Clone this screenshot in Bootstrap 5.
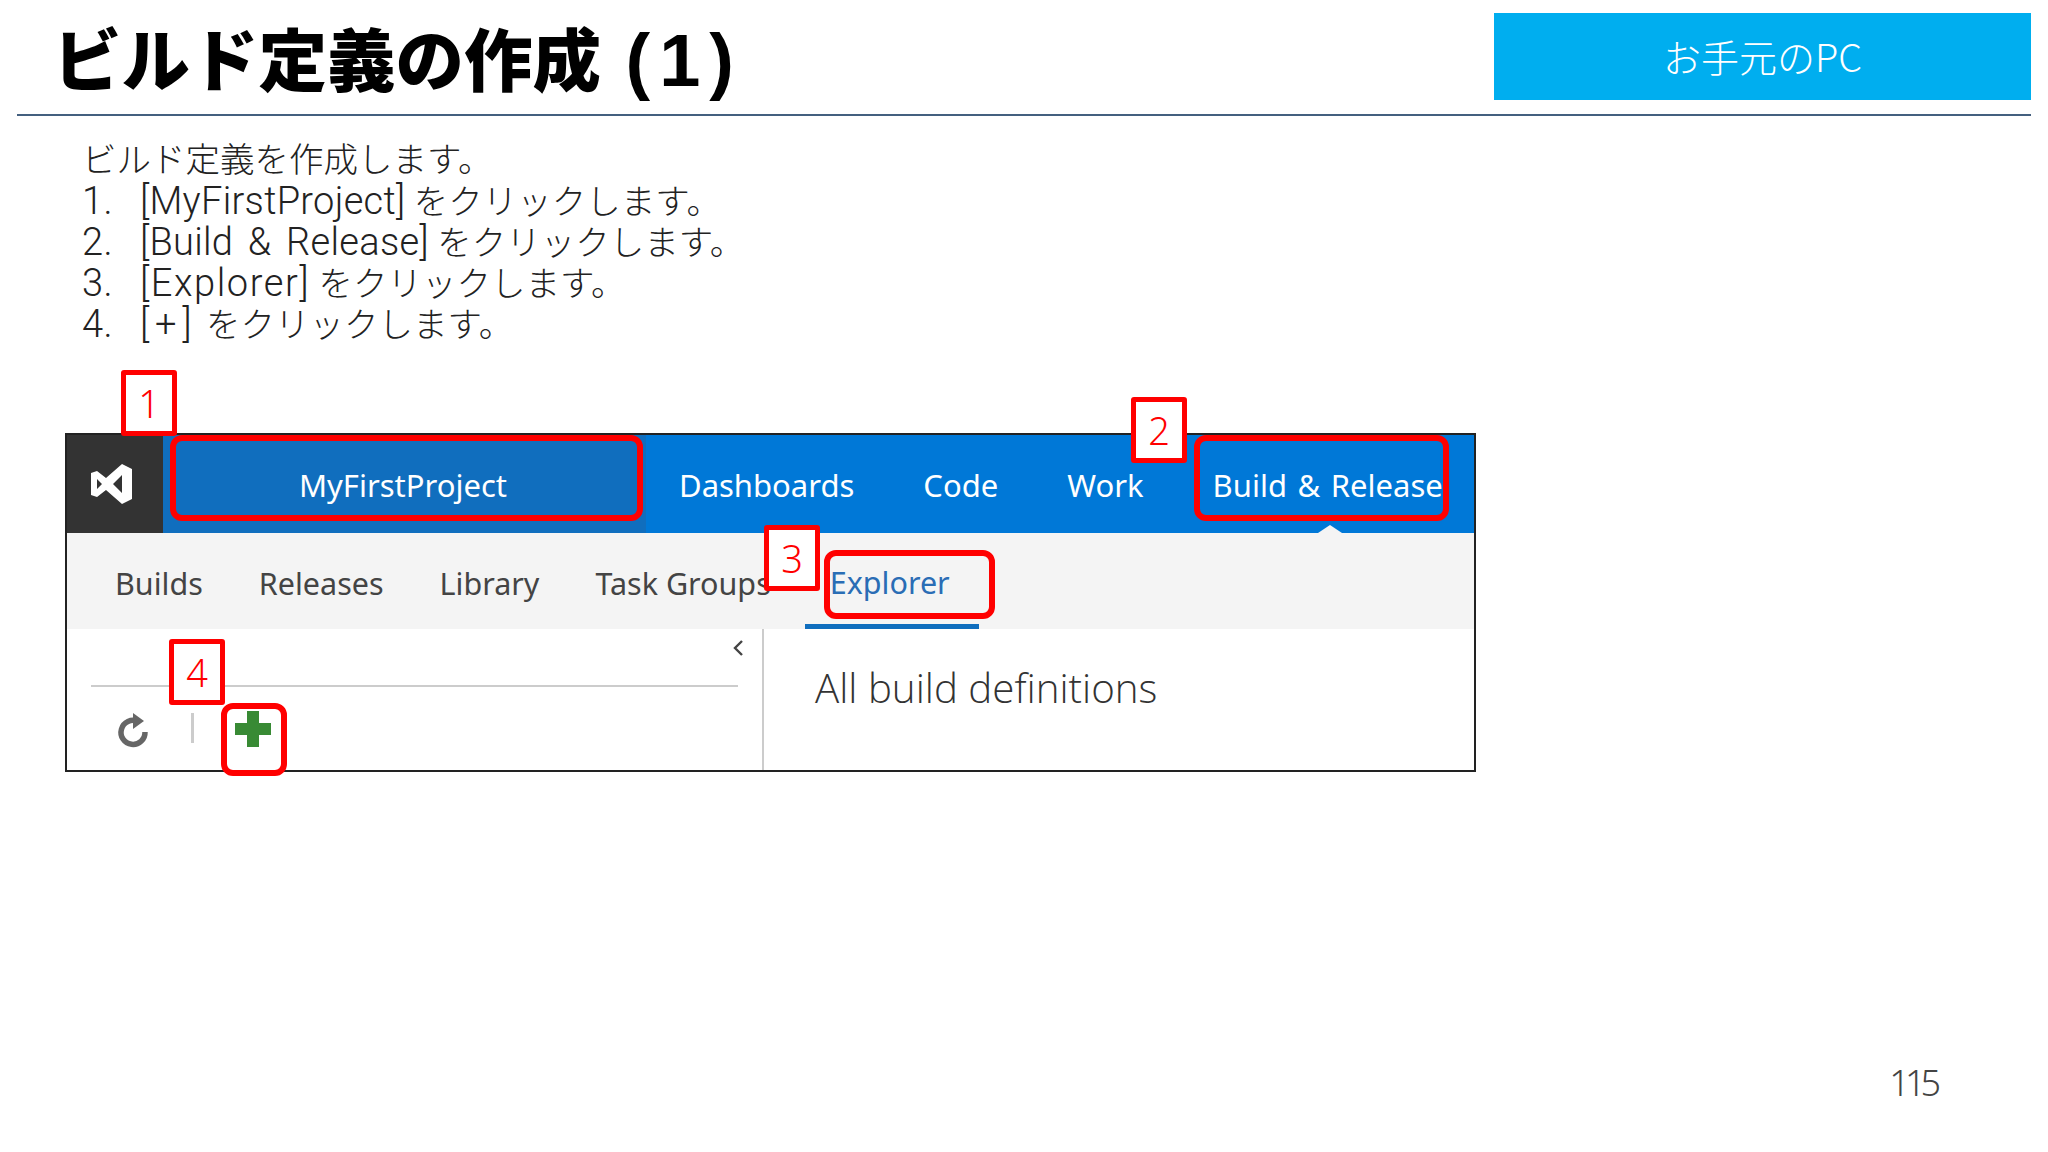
<!DOCTYPE html>
<html lang="ja">
<head>
<meta charset="utf-8">
<title>ビルド定義の作成 (1)</title>
<link href="https://cdn.jsdelivr.net/npm/bootstrap@5.3.0/dist/css/bootstrap.min.css" rel="stylesheet">
<style>
:root{--ui:"Open Sans","Noto Sans CJK JP",sans-serif;}
html,body{height:100%;}
body{background:#fff;font-family:var(--ui);color:#222;overflow:hidden;}
.slide-page{width:2048px;height:1152px;padding:13px 17px 0;}
.slide-head{height:103px;border-bottom:2px solid #44607f;}
.slide-title{font-family:"Noto Sans CJK JP",sans-serif;font-weight:900;font-size:68.5px;line-height:1;color:#000;margin:0 0 0 36px;padding-bottom:16px;}
.title-no{font-family:"Liberation Sans",sans-serif;font-weight:700;font-size:74px;letter-spacing:9px;margin-left:-5px;}
.env-tag{width:537px;height:87px;background:#00aeef;color:#fff;font-size:38px;font-weight:300;font-family:"Noto Sans CJK JP",sans-serif;padding-bottom:2px;}
.steps{margin:24px 0 0 65px;font-size:34.5px;line-height:41px;font-weight:300;font-family:Roboto,"Noto Sans CJK JP",sans-serif;color:#222;}
.step-row{height:41px;}
.steps-num{width:58px;}
.lat{font-family:Roboto,sans-serif;font-size:38px;line-height:41px;font-weight:300;letter-spacing:.3px;word-spacing:5px;}
.wide-gap{letter-spacing:1.6px;}
.plus-gap{letter-spacing:6px;}
.shot-wrap{margin:88px 0 0 48px;width:1411px;height:339px;}
.shot{width:1411px;height:339px;border:2px solid #222;background:#fff;font-family:"Noto Sans",sans-serif;overflow:hidden;}
.top-bar{height:98px;background:#0078d7;color:#fff;font-size:31px;}
.vs-cell{width:96px;background:#333;padding-right:8px;}
.vs-mark{width:41px;height:40px;}
.project-cell{width:483px;background:#106ebe;margin-right:33px;padding:3px 3px 0 0;}
.top-links{column-gap:69px;padding-top:3px;}
.build-link{word-spacing:2.5px;}
.sub-bar{height:96px;background:#f4f4f4;color:#444;font-size:30.5px;padding-left:48px;column-gap:56px;padding-top:5px;}
.sub-active{color:#2a6db5;border-bottom:5px solid #106ebe;padding:8px 29px 0 25px;margin:-5px 0 0 -22px;align-self:stretch;display:flex;align-items:center;}
.pane-left{width:697px;border-right:2px solid #ccc;}
.pane-rule{height:2px;background:#ccc;margin:0 24px 0 24px;}
.pane-top{height:56px;padding:10px 18px 0 0;}
.pane-tools{height:82px;padding-left:49px;}
.tool-icon{margin-top:3px;}
.tool-plus{margin-top:1px;}
.tool-gap{width:3px;height:30px;background:#ccc;margin:0 41px 0 41px;}
.pane-title{font-family:"Open Sans",sans-serif;font-size:40.3px;font-weight:300;color:#333;padding:29px 0 0 51px;}
.mark-num,.mark-box{position:absolute;border:5px solid #f00;border-radius:3px;}
.mark-num{width:56px;height:66px;background:#fff;color:#f00;font-size:38px;font-weight:300;font-family:"Noto Sans",sans-serif;z-index:2;}
.mark-box{border-width:6px;border-radius:12px;z-index:1;}
.nub{position:absolute;left:1251px;top:90px;width:0;height:0;border-left:12px solid transparent;border-right:12px solid transparent;border-bottom:8px solid #f4f4f4;}
.page-no{position:absolute;right:112px;top:1056px;font-size:36px;font-weight:300;color:#444;letter-spacing:-5px;font-family:"Noto Sans",sans-serif;}
</style>
</head>
<body>
<div class="slide-page position-relative">
  <header class="slide-head d-flex justify-content-between align-items-start">
    <h1 class="slide-title align-self-end text-nowrap">ビルド定義の作成<span class="title-no"> (1)</span></h1>
    <div class="env-tag d-flex align-items-center justify-content-center">お手元のPC</div>
  </header>
  <div class="steps">
    <div class="step-row">ビルド定義を作成します。</div>
    <div class="step-row d-flex"><span class="steps-num lat">1.</span><span><span class="lat">[MyFirstProject]</span> をクリックします。</span></div>
    <div class="step-row d-flex"><span class="steps-num lat">2.</span><span><span class="lat">[Build &amp; Release]</span> をクリックします。</span></div>
    <div class="step-row d-flex"><span class="steps-num lat">3.</span><span><span class="lat wide-gap">[Explorer]</span> をクリックします。</span></div>
    <div class="step-row d-flex"><span class="steps-num lat">4.</span><span><span class="lat plus-gap">[+]</span> をクリックします。</span></div>
  </div>
  <div class="shot-wrap position-relative">
    <div class="shot d-flex flex-column">
      <div class="top-bar d-flex position-relative">
        <div class="vs-cell d-flex align-items-center justify-content-center">
          <svg class="vs-mark" viewBox="0 0 41 40"><path fill="#fff" fill-rule="evenodd" d="M0 9 6 7l9 7L31 0l10 5v30l-10 5-16-14-9 7-6-2zM6 15v10l5-5zM31 11l-9 9 9 9z"/></svg>
        </div>
        <div class="project-cell d-flex align-items-center justify-content-center">MyFirstProject</div>
        <div class="top-links d-flex align-items-center">
          <span>Dashboards</span><span>Code</span><span>Work</span><span class="text-nowrap build-link">Build &amp; Release</span>
        </div>
        <span class="nub"></span>
      </div>
      <div class="sub-bar d-flex align-items-center">
        <span>Builds</span><span>Releases</span><span>Library</span><span class="text-nowrap">Task Groups</span><span class="sub-active">Explorer</span>
      </div>
      <div class="d-flex flex-grow-1">
        <div class="pane-left">
          <div class="pane-top d-flex justify-content-end align-items-start">
            <svg width="12" height="18" viewBox="0 0 12 18"><path d="M10 2 3 9l7 7" fill="none" stroke="#444" stroke-width="2.4"/></svg>
          </div>
          <div class="pane-rule"></div>
          <div class="pane-tools d-flex align-items-center">
            <svg class="tool-icon" width="34" height="36" viewBox="0 0 34 36"><path d="M22 9.5A12 12 0 1 0 29 20" fill="none" stroke="#666" stroke-width="5.5"/><path d="M17 1v16l11-8z" fill="#666"/></svg>
            <span class="tool-gap"></span>
            <svg class="tool-plus" width="36" height="36" viewBox="0 0 36 36"><path fill="#388a34" d="M12 0h12v12h12v12H24v12H12V24H0V12h12z"/></svg>
          </div>
        </div>
        <div class="pane-title flex-grow-1">All build definitions</div>
      </div>
    </div>
    <span class="mark-box" style="left:105px;top:2px;width:473px;height:86px"></span>
    <span class="mark-box" style="left:1129px;top:2px;width:255px;height:86px"></span>
    <span class="mark-box" style="left:759px;top:117px;width:171px;height:69px"></span>
    <span class="mark-box" style="left:156px;top:270px;width:66px;height:73px"></span>
    <span class="mark-num d-flex align-items-center justify-content-center" style="left:56px;top:-63px">1</span>
    <span class="mark-num d-flex align-items-center justify-content-center" style="left:1066px;top:-36px">2</span>
    <span class="mark-num d-flex align-items-center justify-content-center" style="left:699px;top:92px">3</span>
    <span class="mark-num d-flex align-items-center justify-content-center" style="left:104px;top:206px">4</span>
  </div>
  <div class="page-no">115</div>
</div>
<script src="https://cdn.jsdelivr.net/npm/bootstrap@5.3.0/dist/js/bootstrap.bundle.min.js"></script>
</body>
</html>
